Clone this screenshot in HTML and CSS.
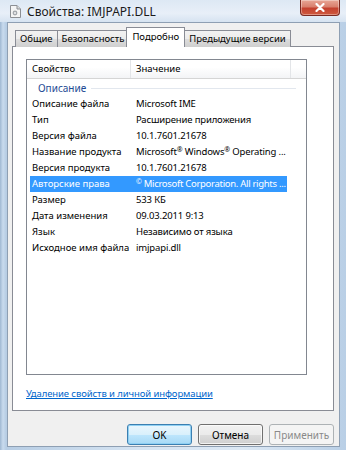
FILE: index.html
```html
<!DOCTYPE html>
<html lang="ru">
<head>
    <meta charset="UTF-8">
    <title>Свойства: IMJPAPI.DLL</title>
    <link rel="stylesheet" href="styles.css">
</head>
<body>
    <div class="window">
        <div class="titlebar">
            <svg class="app-icon" width="11" height="13" viewBox="0 0 11 13">
                <path d="M0.5 0.5 H7 L10.5 4 V12.5 H0.5 Z" fill="#f4f4f4" stroke="#8c8f94"/>
                <path d="M7 0.5 V4 H10.5" fill="#dcdcdc" stroke="#8c8f94"/>
                <circle cx="5" cy="8" r="2.4" fill="#a5a9ae"/>
                <circle cx="5" cy="8" r="1" fill="#f4f4f4"/>
            </svg>
            <span class="title">Свойства: IMJPAPI.DLL</span>
            <div class="close-btn">
                <svg width="10" height="9" viewBox="0 0 10 9">
                    <path d="M1.5 1 L8.5 8 M8.5 1 L1.5 8" stroke="#ffffff" stroke-width="2.2" stroke-linecap="round"/>
                </svg>
            </div>
        </div>

        <div class="client">
            <div class="tabs">
                <div class="tab">Общие</div>
                <div class="tab">Безопасность</div>
                <div class="tab active">Подробно</div>
                <div class="tab">Предыдущие версии</div>
            </div>

            <div class="tab-panel">
                <div class="listview">
                    <div class="lv-header">
                        <div class="lv-col name">Свойство</div>
                        <div class="lv-col value">Значение</div>
                        <div class="lv-col fill"></div>
                    </div>

                    <div class="lv-group">
                        <span>Описание</span>
                        <span class="lv-group-line"></span>
                    </div>

                    <div class="lv-row"><span>Описание файла</span><span>Microsoft IME</span></div>
                    <div class="lv-row"><span>Тип</span><span>Расширение приложения</span></div>
                    <div class="lv-row"><span>Версия файла</span><span>10.1.7601.21678</span></div>
                    <div class="lv-row"><span>Название продукта</span><span>Microsoft<sup>®</sup> Windows<sup>®</sup> Operating ...</span></div>
                    <div class="lv-row"><span>Версия продукта</span><span>10.1.7601.21678</span></div>
                    <div class="lv-row selected"><span>Авторские права</span><span class="tight"><sup>©</sup> Microsoft Corporation. All rights ...</span></div>
                    <div class="lv-row"><span>Размер</span><span>533 КБ</span></div>
                    <div class="lv-row"><span>Дата изменения</span><span>09.03.2011 9:13</span></div>
                    <div class="lv-row"><span>Язык</span><span>Независимо от языка</span></div>
                    <div class="lv-row"><span>Исходное имя файла</span><span>imjpapi.dll</span></div>
                </div>

                <a class="remove-link" href="#">Удаление свойств и личной информации</a>
            </div>

            <div class="buttons">
                <button class="btn default">OK</button>
                <button class="btn">Отмена</button>
                <button class="btn" disabled>Применить</button>
            </div>
        </div>
    </div>
</body>
</html>
```

FILE: styles.css
```css
body {
    margin: 0;
    font-family: "Noto Sans", "Open Sans", sans-serif;
    font-size: 9.5px;
    color: #000;
    background: #fff;
}

.window {
    width: 346px;
    height: 450px;
    box-sizing: border-box;
    display: flex;
    flex-direction: column;
    padding-bottom: 3px;
    background: linear-gradient(90deg, #9fb8d2 0px, #c9dbee 3px, #b7cde4 6px, #d6e4f2 40%, #dce8f4 70%, #b9cfe6 100%);
}

/* title bar */
.titlebar {
    height: 22px;
    display: flex;
    align-items: flex-start;
    padding-left: 10px;
    padding-right: 6px;
    background: linear-gradient(180deg, #dde8f4 0%, #e8eff8 60%, #d6e3f1 100%);
}

.app-icon {
    margin-top: 5px;
    flex-shrink: 0;
}

.title {
    margin-left: 6px;
    margin-top: 3px;
    font-size: 12px;
    color: #1b1b1b;
}

.close-btn {
    margin-left: auto;
    width: 40px;
    height: 16px;
    box-sizing: border-box;
    border: 1px solid #7a2a22;
    border-top: none;
    border-radius: 0 0 4px 4px;
    background: linear-gradient(180deg, #e8a696 0%, #d9806e 45%, #c4412f 55%, #cf5a3f 100%);
    display: flex;
    align-items: center;
    justify-content: center;
    box-shadow: inset 0 0 0 1px rgba(255, 255, 255, 0.35);
}

/* client area */
.client {
    flex: 1;
    margin: 0 6px 0 7px;
    background: #f0f0f0;
    border: 1px solid #8e9fb3;
    display: flex;
    flex-direction: column;
    padding: 5px 5px 0 4px;
}

.tabs {
    display: flex;
    align-items: flex-end;
    height: 19px;
    padding-left: 3px;
    position: relative;
    z-index: 1;
}

.tab {
    height: 16px;
    line-height: 15px;
    padding: 0 4px;
    border: 1px solid #898c95;
    border-bottom: none;
    margin-right: -1px;
    background: linear-gradient(180deg, #f2f2f2 0%, #ebebeb 50%, #dddddd 51%, #cfcfcf 100%);
    color: #000;
    white-space: nowrap;
}

.tab.active {
    height: 19px;
    line-height: 17px;
    padding: 0 5px;
    margin: 0 -2px 0 -2px;
    background: #ffffff;
    position: relative;
    z-index: 2;
}

.tab.active + .tab {
    margin-left: 1px;
}

.tab-panel {
    height: 365px;
    margin-top: -1px;
    background: #ffffff;
    border: 1px solid #898c95;
    padding: 12px 0 0 13px;
    box-sizing: border-box;
}

/* list view */
.listview {
    width: 281px;
    height: 316px;
    box-sizing: border-box;
    border: 1px solid #828790;
    background: #fff;
}

.lv-header {
    display: flex;
    height: 18px;
    border-bottom: 1px solid #d5d5d5;
    background: linear-gradient(180deg, #ffffff 0%, #ffffff 40%, #f3f4f6 100%);
}

.lv-col {
    line-height: 18px;
    padding-left: 5px;
    box-sizing: border-box;
    border-right: 1px solid #e3e5e8;
}

.lv-col.name {
    width: 104px;
}

.lv-col.value {
    width: 160px;
}

.lv-col.fill {
    flex: 1;
    border-right: none;
}

.lv-group {
    display: flex;
    align-items: center;
    height: 17px;
    padding-left: 11px;
    padding-right: 10px;
    color: #1e4a94;
    font-size: 10px;
}

.lv-group-line {
    flex: 1;
    height: 1px;
    margin-left: 5px;
    margin-top: 2px;
    background: #e2e7ee;
}

.lv-row {
    display: grid;
    grid-template-columns: 104px 1fr;
    width: 257px;
    height: 16px;
    line-height: 16px;
    margin-left: 3px;
    white-space: nowrap;
    overflow: hidden;
}

.lv-row span {
    padding-left: 2px;
    overflow: hidden;
}

.lv-row span + span {
    letter-spacing: -0.15px;
}

.lv-row span.tight {
    letter-spacing: -0.3px;
}

.lv-row sup {
    font-size: 7px;
    line-height: 0;
    vertical-align: 3px;
}

.lv-row.selected {
    background: #3399ff;
    color: #ffffff;
}

.remove-link {
    display: inline-block;
    margin-top: 12px;
    color: #0066cc;
    text-decoration: underline;
    letter-spacing: -0.1px;
}

/* buttons */
.buttons {
    display: flex;
    justify-content: flex-end;
    gap: 6px;
    margin-top: 13px;
}

.btn {
    width: 65px;
    height: 21px;
    padding: 0;
    font-family: inherit;
    font-size: 10px;
    color: #000;
    border: 1px solid #707070;
    border-radius: 3px;
    background: linear-gradient(180deg, #f2f2f2 0%, #ebebeb 50%, #dddddd 51%, #cfcfcf 100%);
    box-shadow: inset 0 0 0 1px rgba(255, 255, 255, 0.7);
}

.btn.default {
    border-color: #3c7fb1;
    box-shadow: inset 0 0 0 1px #8fd0f3;
    background: linear-gradient(180deg, #eaf6fd 0%, #d9f0fc 50%, #bee6fd 51%, #a7d9f5 100%);
}

.btn:disabled {
    color: #8a8a8a;
    border-color: #adb2b5;
    background: #f4f4f4;
    box-shadow: none;
}
```
